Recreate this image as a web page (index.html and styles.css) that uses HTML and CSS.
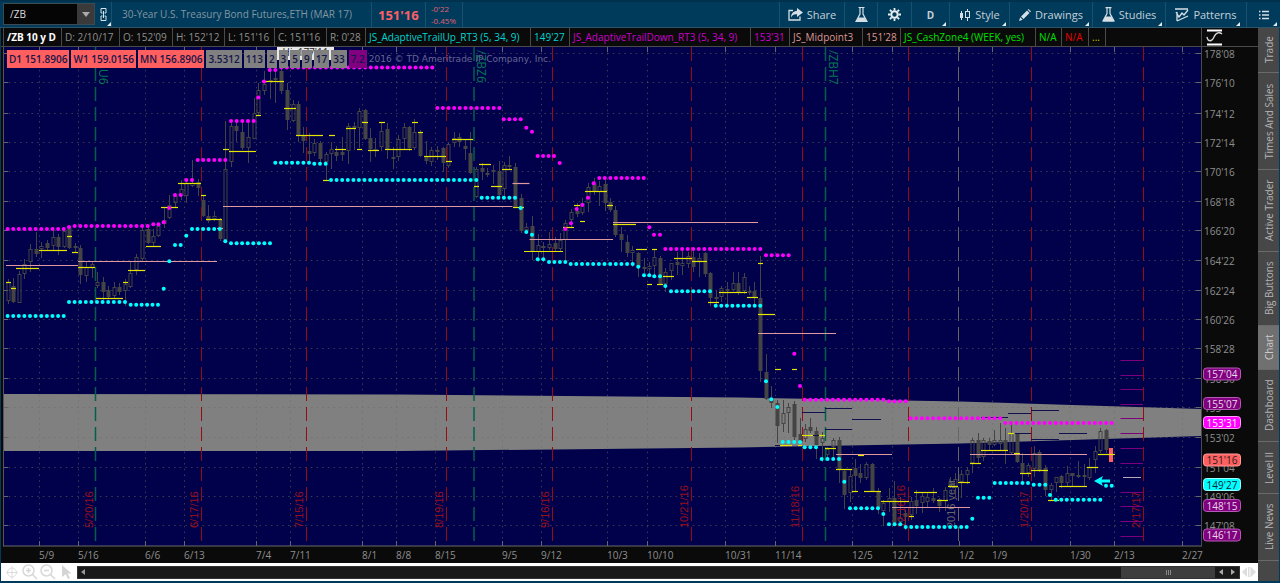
FILE: index.html
```html
<!DOCTYPE html>
<html lang="en">
<head>
<meta charset="utf-8">
<title>/ZB Chart</title>
<link rel="stylesheet" href="styles.css">
</head>
<body>
<header class="toolbar">
  <div class="symbol-box">
    <input class="symbol-input" type="text" value="/ZB" aria-label="Symbol">
    <button class="symbol-drop" aria-label="Recent symbols"><svg width="8" height="5" viewBox="0 0 8 5"><path d="M0 0h8L4 5z" fill="#aaa"/></svg></button>
  </div>
  <button class="tool link-tool corner" aria-label="Link">
    <svg width="7" height="13" viewBox="0 0 7 13" fill="none" stroke="#d8e2e8"><path d="M1 5V.500h5V5H4.500M1 5h1.500M1 8v4.500h5V8H4.500M1 8h1.500M3.500 3v7"/></svg>
  </button>
  <div class="instrument">30-Year U.S. Treasury Bond Futures,ETH (MAR 17)</div>
  <div class="last">151'16</div>
  <div class="change"><span>-0'22</span><span>-0.45%</span></div>
  <div class="spacer"></div>
  <button class="tool w-share"><svg width="15" height="13" viewBox="0 0 15 13"><path d="M5 2.500H1v9.500h11V8.500" fill="none" stroke="#d5dfe5" stroke-width="1.300"/><path d="M9 0l6 4.500L9 9V6.300C6 6 4.500 7 3 9.500 3 5.500 5.500 3 9 2.700z" fill="#d5dfe5"/></svg>Share</button>
  <button class="tool w-flask" aria-label="Edit studies"><svg width="13" height="16" viewBox="0 0 13 16"><path d="M3.500.500h6M5 1v6L1 14.500h11L8 7V1" fill="none" stroke="#d5dfe5" stroke-width="1.200"/><path d="M3.500 10.500h6l2.300 4.500H1.200z" fill="#d5dfe5"/></svg></button>
  <button class="tool w-gear" aria-label="Settings"><svg width="13" height="13" viewBox="0 0 13 13" fill="none" stroke="#e8eef2"><circle cx="6.500" cy="6.500" r="3.200" stroke-width="2"/><path d="M6.500 0v2.500M6.500 10.500V13M0 6.500h2.500M10.500 6.500H13M1.900 1.900l1.800 1.800M9.300 9.300l1.800 1.800M11.100 1.900L9.300 3.700M3.700 9.300l-1.800 1.800" stroke-width="1.800"/></svg></button>
  <button class="tool w-agg corner"><b>D</b></button>
  <button class="tool w-style corner"><svg width="12" height="12" viewBox="0 0 12 12"><path d="M2.500 2v9M8.500 0v12" stroke="#d5dfe5"/><rect x="1" y="4" width="3" height="5" fill="#d5dfe5"/><rect x="6.500" y="2.500" width="4" height="6" fill="#003b5c" stroke="#d5dfe5"/></svg>Style</button>
  <button class="tool w-draw corner"><svg width="12" height="12" viewBox="0 0 12 12" fill="#d5dfe5"><path d="M0 12l1.200-3.700 2.500 2.500zM2 7.500L8 1.500l2.500 2.500-6 6zM8.700.800l.8-.8L12 2.500l-.8.800z"/></svg>Drawings</button>
  <button class="tool w-studies corner"><svg width="13" height="15" viewBox="0 0 13 15"><path d="M3.500.600h6M5 1v5.500L1 14h11L8 6.500V1" fill="none" stroke="#d5dfe5" stroke-width="1.200"/><path d="M3.500 9.500h6l2.500 5H1z" fill="#d5dfe5"/></svg>Studies</button>
  <button class="tool w-patterns corner"><svg width="14" height="14" viewBox="0 0 14 14" fill="none" stroke="#d5dfe5"><path d="M0 1h13M1 4l3 5 3-4 2 2 4-5M2 4v9M2 13l11-5" stroke-width="1.300"/></svg>Patterns</button>
  <button class="tool w-list corner" aria-label="Menu"><svg width="10" height="10" viewBox="0 0 10 10" stroke="#d5dfe5"><path d="M0 1.500h1.500M3 1.500h7M0 5h1.500M3 5h7M0 8.500h1.500M3 8.500h7" stroke-width="1.300"/></svg></button>
</header>

<div class="workspace">
  <main class="chart-pane">
    <div class="status-row">
      <span class="title">/ZB 10 y D</span><span>D: 2/10/17</span><span>O: 152'09</span><span>H: 152'12</span><span>L: 151'16</span><span>C: 151'16</span><span>R: 0'28</span><span class="cyan">JS_AdaptiveTrailUp_RT3 (5, 34, 9)</span><span class="cyan">149'27</span><span class="purple">JS_AdaptiveTrailDown_RT3 (5, 34, 9)</span><span class="purple">153'31</span><span class="salmon">JS_Midpoint3</span><span class="salmon">151'28</span><span class="green">JS_CashZone4 (WEEK, yes)</span><span class="green">N/A</span><span class="red">N/A</span><span class="yellow">...</span><span></span>
      <button class="axis-mode" aria-label="Price axis"><svg width="18" height="17" viewBox="0 0 18 17" fill="none" stroke="#d8d8d8"><path d="M1 1.500h15M1 15.500h15" stroke="#fff" stroke-width="2"/><path d="M1 8c1 5 5 5 7 0s6-5 8-3" stroke-width="1.300"/></svg></button>
    </div>
    <div class="chart">
      <svg class="chart-svg" id="chart" role="img" aria-label="Daily price chart"></svg>
      <div class="tags">
        <span class="tag hot">D1 151.8906</span><span class="tag hot">W1 159.0156</span><span class="tag hot">MN 156.8906</span><span class="tag">3.5312</span><span class="tag">113</span><span class="tag">2</span><span class="tag">3</span><span class="tag">5</span><span class="tag">9</span><span class="tag">17</span><span class="tag">33</span><span class="tag violet">7.2</span><span class="watermark">2016 © TD Ameritrade IP Company, Inc.</span>
      </div>
    </div>
    <footer class="bottom-bar">
      <button class="mini" aria-label="Crosshair"><svg width="12" height="13" viewBox="0 0 12 13" fill="none" stroke="#ddd"><circle cx="6" cy="6.500" r="4.500"/><path d="M6 0v13M0 6.500h12"/></svg></button>
      <button class="mini" aria-label="Zoom in"><svg width="16" height="16" viewBox="0 0 16 16" fill="none" stroke="#d8d8d8"><circle cx="6.500" cy="6.500" r="5.500" stroke-width="1.500"/><path d="M4 6.500h5M6.500 4v5M10.500 10.500l4.500 4.500" stroke-width="1.600"/></svg></button>
      <button class="mini" aria-label="Zoom out"><svg width="16" height="16" viewBox="0 0 16 16" fill="none" stroke="#d8d8d8"><circle cx="6.500" cy="6.500" r="5.500" stroke-width="1.500"/><path d="M4 6.500h5M10.500 10.500l4.500 4.500" stroke-width="1.600"/></svg></button>
      <button class="mini" aria-label="Pointer"><svg width="11" height="14" viewBox="0 0 11 14"><path d="M1 0l9.500 8.500H6.500L9 13l-2 1-2.300-4.700L1 12z" fill="#d4d4d4"/></svg></button>
      <div class="scrollbar">
        <button class="arrow first" aria-label="Scroll to start"><svg width="4" height="6" viewBox="0 0 4 6"><path d="M4 0v6L0 3z" fill="#999"/></svg></button>
        <div class="track"></div>
        <div class="thumb"><i></i><i></i><i></i></div>
        <button class="arrow" aria-label="Scroll left"><svg width="4" height="6" viewBox="0 0 4 6"><path d="M4 0v6L0 3z" fill="#aaa"/></svg></button>
        <button class="arrow" aria-label="Scroll right"><svg width="4" height="6" viewBox="0 0 4 6"><path d="M0 0v6l4-3z" fill="#aaa"/></svg></button>
      </div>
      <button class="mini" aria-label="Fit"><svg width="14" height="10" viewBox="0 0 14 10"><path d="M5 0v10L0 5zM9 0v10l5-5z" fill="#ddd"/><path d="M6.500 0v10M8 0v10" stroke="#ddd"/></svg></button>
    </footer>
  </main>
  <nav class="side-tabs">
    <button class="t-trade">Trade</button><button class="t-times">Times And Sales</button><button class="t-active">Active Trader</button><button class="t-big">Big Buttons</button><button class="t-chart selected">Chart</button><button class="t-dash">Dashboard</button><button class="t-level">Level II</button><button class="t-news">Live News</button><div class="rest"></div>
  </nav>
</div>
<script src="chart.js"></script>
</body>
</html>
```
FILE: styles.css
```css
* { box-sizing: border-box; }
body {
  margin: 0;
  height: 100vh;
  display: flex;
  flex-direction: column;
  overflow: hidden;
  background: #003b5c;
  color: #8f8f8f;
  font: 10px/14px "Open Sans", "Noto Sans", sans-serif;
}
button, input { font: inherit; color: inherit; border: 0; margin: 0; padding: 0; background: none; }

.toolbar {
  flex: none;
  height: 28px;
  display: flex;
  background: #003b5c;
  border-top: 2px solid #00314d;
  border-bottom: 1px solid #2e5468;
  color: #c3d0d8;
}
.symbol-box {
  display: flex;
  width: 92px;
  height: 22px;
  margin: 1px 0 0 3px;
  border: 1px solid #3d4a52;
  background: #050505;
}
.symbol-input { flex: 1; min-width: 0; padding-left: 6px; color: #ddd; outline: 0; font-size: 10px; }
.symbol-drop { width: 17px; background: #3a3a3a; display: flex; align-items: center; justify-content: center; }
.tool {
  position: relative;
  display: flex;
  align-items: center;
  justify-content: center;
  gap: 4px;
  border-left: 1px solid #17516f;
  font-size: 11px;
}
.corner::after {
  content: "";
  position: absolute;
  right: 3px;
  bottom: 1px;
  border-style: solid;
  border-width: 0 0 4px 4px;
  border-color: transparent transparent #e4ecf0 transparent;
}
.link-tool { width: 16px; border-left: 0; }
.link-tool::after { right: 0; }
.instrument { border-left: 1px solid #17516f; padding: 5px 10px 0 10px; width: 260px; white-space: nowrap; color: #8496a0; }
.last { border-left: 1px solid #17516f; width: 54px; padding: 6px 0 0 6px; font-size: 13px; font-weight: 700; color: #ff5f66; }
.change {
  display: flex;
  flex-direction: column;
  width: 38px;
  padding: 1px 0 0 5px;
  border-left: 1px solid #17516f;
  border-right: 1px solid #17516f;
  color: #e06070;
  font-size: 8px;
  line-height: 12px;
}
.spacer { flex: 1; }
.w-share { width: 65px; }
.w-flask { width: 33px; }
.w-gear { width: 34px; }
.w-agg { width: 38px; font-size: 10px; }
.w-style { width: 60px; }
.w-draw { width: 83px; }
.w-studies { width: 73px; }
.w-patterns { width: 81px; }
.w-list { width: 34px; }
.w-patterns::after { right: 6px; }

.workspace { flex: 1; min-height: 0; display: flex; padding: 0 1px 2px 1px; }
.chart-pane { flex: 1; min-width: 0; display: flex; flex-direction: column; background: #0a0a0a; }
.status-row {
  flex: none;
  height: 19px;
  display: grid;
  grid-template-columns: 58px 58px 53px 52px 50px 52px 39px 165px 39px 181px 39px 73px 38px 135px 26px 27px 17px 1fr 57px;
  padding-left: 2px;
  border-bottom: 1px solid #4a4a4a;
}
.status-row span { border-left: 1px solid #4a4a4a; padding: 2px 0 0 3px; white-space: nowrap; color: #8f8f8f; background: #0a0a0a; }
.status-row .title { color: #fff; font-weight: 700; }
.status-row .cyan { color: #00d4d4; }
.status-row .purple { color: #cc00cc; }
.status-row .salmon { color: #dd9696; }
.status-row .green { color: #00e000; }
.status-row .red { color: #e80000; }
.status-row .yellow { color: #c8c800; }
.axis-mode { border-left: 1px solid #4a4a4a; background: #0a0a0a; text-align: left; padding: 1px 0 0 4px; line-height: 0; }

.chart { position: relative; flex: 1; min-height: 0; margin-left: 2px; }
.chart-svg { position: absolute; width: 100%; height: 100%; display: block; }
.tags { position: absolute; left: 4px; top: 3px; display: flex; gap: 2px; }
.tag {
  height: 18px;
  padding: 2px 2px 0;
  background: #808080;
  color: #16164a;
  font-weight: 600;
  white-space: nowrap;
}
.tag.hot { background: #ff5f5f; }
.tag.violet { background: #800080; }
.watermark { padding-top: 2px; color: #66668f; font: 9px/14px "DejaVu Sans", sans-serif; white-space: nowrap; }

.axis-text { fill: #8f8f8f; font-size: 10px; }
.contract { fill: #007a50; font-size: 12px; }
.expiry { fill: #96101c; font: 11px "Liberation Sans", sans-serif; }
.year { fill: #666; font: 11px "Liberation Sans", sans-serif; }
.hi-label { fill: #222; font-size: 10px; }

.bottom-bar { flex: none; height: 18px; display: flex; align-items: center; background: #fff; padding-left: 2px; }
.mini { display: flex; align-items: center; justify-content: center; width: 18px; height: 18px; }
.scrollbar { flex: 1; display: flex; height: 13px; margin-left: 2px; background: #191919; border: 1px solid #333; }
.track { flex: 1; }
.thumb { width: 94px; background: #3e3e3e; display: flex; gap: 1px; align-items: center; justify-content: center; }
.thumb i { width: 1px; height: 5px; background: #888; }
.arrow { width: 12px; display: flex; align-items: center; justify-content: center; }
.arrow.first { width: 9px; }

.side-tabs { flex: none; width: 21px; display: flex; flex-direction: column; background: #474747; }
.side-tabs button {
  writing-mode: vertical-rl;
  rotate: 180deg;
  width: 21px;
  border-top: 1px solid #6a6a6a;
  color: #b4b4b4;
  text-align: center;
  line-height: 20px;
  white-space: nowrap;
}
.side-tabs .selected { background: #707070; color: #ccc; }
.side-tabs .rest { flex: 1; }
.t-trade { height: 45px; }
.t-times { height: 97px; }
.t-active { height: 82px; }
.t-big { height: 74px; }
.t-chart { height: 44px; }
.t-dash { height: 72px; }
.t-level { height: 52px; }
.t-news { height: 67px; }
```
FILE: chart.js
```javascript
// Plot coordinates below share one space whose plot area is this box.
const BOX = { x: 3, y: 47, w: 1198, h: 499 };
const AXIS_W = 57, AXIS_H = 17, STEP = 5.63;

// [x, high, bodyTop, bodyBottom, low, filled]
const candles = [
[8,279,282,301,304,0],[13,278,286,302,303,1],[19,271,274,303,303,0],[24,259,264,274,279,0],[30,244,249,262,272,0],[36,232,249,254,257,1],[41,242,246,249,258,0],[47,240,243,248,250,1],[53,227,237,246,250,0],[58,234,237,247,255,1],[64,229,231,247,248,0],[69,227,228,248,249,1],[75,243,246,248,253,1],[80,245,248,275,284,1],[86,262,267,276,282,0],[92,262,264,268,278,0],[97,272,282,286,288,0],[103,277,282,292,300,1],[108,286,290,297,298,1],[114,282,287,296,298,0],[119,283,287,292,295,1],[125,279,284,291,306,0],[130,262,273,287,288,0],[136,254,257,270,275,0],[142,227,230,259,262,0],[148,226,229,243,244,1],[153,229,236,243,247,0],[158,224,226,236,237,0],[164,208,220,224,228,0],[169,195,205,218,219,0],[175,193,196,203,207,0],[181,180,189,196,200,0],[186,182,183,196,203,0],[192,160,183,186,187,0],[198,179,182,188,196,1],[203,195,200,216,217,1],[208,205,216,221,223,1],[214,211,216,219,221,0],[220,218,220,239,241,1],[225,121,169,240,242,0],
[231,123,126,162,167,0],[236,122,126,131,142,1],[242,123,132,148,150,1],[248,121,137,148,163,0],[254,98,113,139,139,0],[258,83,90,113,115,0],[264,71,84,91,95,0],[270,68,80,82,99,0],[275,68,78,80,103,0],[281,68,71,91,94,1],[287,83,90,120,130,1],[293,100,104,121,122,0],[298,101,104,136,142,1],[303,127,136,141,153,1],[309,133,151,154,162,1],[314,139,143,153,156,0],[320,141,143,159,165,1],[326,152,154,162,180,0],[331,142,149,154,169,0],[336,146,152,156,161,1],[342,137,152,155,161,1],[348,123,126,151,164,0],[354,122,126,128,150,1],[359,108,111,128,148,0],[365,109,110,139,140,1],[370,128,138,149,162,1],[375,138,149,151,157,1],[381,122,131,147,151,0],[387,123,129,150,159,1],[393,147,157,159,169,1],[398,135,139,157,161,0],[404,123,127,139,149,0],[409,126,127,148,151,1],[414,119,132,148,150,0],[420,130,133,156,157,1],[426,141,156,161,164,1],[431,147,150,162,166,0],[437,146,150,151,160,0],[443,147,148,163,172,1],[448,142,144,166,168,0],[454,132,138,143,147,0],[459,133,137,142,147,1],[465,140,146,149,160,1],[470,132,153,173,174,1],[476,167,169,197,198,0],[482,163,168,172,180,1],[487,168,173,175,177,0],[493,165,170,172,184,0],[499,161,171,195,197,1],[504,162,165,189,197,0],[509,156,165,167,170,0],[515,163,167,207,208,1],[521,194,198,231,233,1],[526,223,227,230,233,0],[532,216,226,252,260,1],[538,234,245,252,262,0],[543,242,246,248,262,1],[549,232,244,248,250,0],[555,237,243,249,252,1],[560,233,240,249,252,0],[565,220,223,240,260,0],[571,209,212,220,227,0],[577,203,211,214,217,1],[582,198,203,213,215,0],[588,183,187,203,212,0],[594,178,184,192,195,1],[599,181,186,192,206,0],[605,178,184,203,211,1],[610,198,202,210,212,1],
[615,206,210,235,237,1],[621,227,234,240,252,1],[627,235,242,253,257,1],[632,246,250,253,267,0],[638,252,253,267,277,1],[644,258,267,268,273,0],[649,262,266,269,275,0],[654,249,257,266,275,0],[660,256,258,284,285,1],[665,268,272,284,292,0],[671,263,263,271,280,0],[677,252,262,265,275,1],[682,251,263,266,275,0],[688,252,256,264,268,0],[693,251,257,267,272,1],[699,253,258,262,277,0],[705,252,253,274,277,1],[710,272,273,298,306,1],[716,291,297,299,306,1],[721,286,288,297,302,0],[727,282,289,291,306,0],[733,272,283,290,291,0],[738,272,283,293,295,1],[744,273,277,291,294,0],[749,286,291,293,295,1],[754,282,291,298,307,1],[760,256,298,371,382,1],[766,354,372,399,400,1],[771,386,398,403,408,1],[777,400,403,426,443,1],[783,400,413,424,432,0],[788,403,407,413,433,0],[794,401,404,437,442,1],[800,418,434,442,443,1],[805,424,429,439,442,0],[810,418,427,431,433,1],[816,427,431,445,459,1],[822,432,438,443,462,0],[827,447,449,455,458,0],[833,438,440,447,460,0],[839,437,440,469,483,1],[844,470,471,495,509,1],[850,469,476,493,502,0],[855,459,468,476,492,1],[860,464,473,478,483,1],[866,462,464,478,480,0],[872,463,464,491,492,1],[878,488,492,508,514,1],[883,500,503,511,526,0],[889,488,498,502,512,0],[894,481,498,523,524,1],[900,497,518,522,523,0],[905,510,513,517,530,1],[911,497,501,515,520,0],[916,490,500,506,514,1],[922,493,496,503,513,0],[927,492,497,502,508,0],[933,488,498,501,503,1],[939,498,499,506,512,1],[945,487,490,501,511,0],[950,477,482,486,488,0],[955,473,479,488,497,0],[961,470,474,482,498,0],[967,467,470,475,484,0],[972,438,440,463,473,0],[978,433,440,458,463,1],[983,438,440,457,461,0],[989,438,441,445,450,1],[994,430,440,445,446,0],[1000,423,440,444,450,0],[1005,428,440,451,464,1],[1011,422,433,453,454,0],[1017,433,434,462,463,1],[1022,453,463,473,482,1],[1028,463,465,473,477,0],[1034,446,453,469,477,0],[1039,450,452,470,472,1],[1045,465,468,490,496,1],[1051,483,485,490,500,0],[1056,477,477,483,492,0],[1061,475,476,483,488,1],[1067,466,473,483,486,0],[1072,473,473,476,486,1],[1078,461,475,477,478,0],[1084,464,475,477,487,0],[1089,458,467,478,480,0],[1095,446,451,460,473,0],[1100,428,431,451,453,0],[1106,429,430,450,453,1]
];

// Dotted trails: [xFrom, xTo, y]
const trailDown = [[7.6,63.7,229],[69,69,227],[74.7,147.7,226],[153.3,158.5,224.3],[163.7,163.7,222.3],[169.3,169.3,208],[175,180.7,195],[186.3,192,180],[197.7,225.3,160],[231,253.7,121],[258.3,258.3,97.5],[264,264,81.5],[269.7,275.3,70],[281.3,432.3,67.5],[437.3,499.3,108],[503.7,520.7,119.3],[526.3,526.3,127.7],[532,532,131.7],[537.7,554,156],[559.7,559.7,163],[565.3,565.3,229],[571,571,223.3],[576.7,576.7,209],[582.3,582.3,205],[588,588,197.7],[593.7,593.7,183.3],[599.3,643.7,178],[649.3,649.3,227.3],[654,660,234.7],[665.3,760.3,249],[766,788.7,255.3],[794.3,794.3,353.7],[800,800,386],[804.7,883.3,399.7],[889,905.7,401.3],[910.7,1000.3,418.3],[1005.3,1111.7,423]];
const trailUp = [[7.6,63.7,316],[69,125,302],[130.7,158,304.7],[163.7,163.7,288.7],[169.3,169.3,261.3],[175,180.7,245],[186.3,186.3,235.7],[192,219.7,229],[225.3,225.3,241.3],[231,270,243.3],[275.3,309,162.7],[314.3,325.7,163.7],[331,476.3,180],[481.7,515,197.7],[520.7,520.7,208],[526.3,526.3,232],[532,532,234.7],[537.7,543.3,259.3],[549,565.3,262],[570.7,632.7,264],[638.3,638.3,266.7],[644,649.3,275.3],[654.3,660,276.3],[665.3,665.3,286],[671,710,291.3],[715.7,760.3,305.7],[766,766,381.3],[771.3,771.3,399.3],[777.3,777.3,407],[782.7,800,442],[804.7,816,447.3],[821.7,839,459],[844.3,844.3,481.7],[850,878,508.3],[883.3,883.3,514],[889,900.3,524.3],[905.7,966.7,527],[972.3,972.3,518.7],[978,989.3,497.7],[994.7,1028,483],[1033.7,1045.3,484.7],[1050,1050,495],[1055.7,1100.3,499.7],[1106,1111.7,485.7]];

// Level segments: [xFrom, xTo, y]
const midpoint = [[6,78,265.5],[78,217,261.5],[217,223,228.5],[223,512.5,206.5],[512.5,529.5,183.5],[529.5,613,239.5],[613,758,222.5],[758,836,333.5],[836,892,454.5],[892,970,507.5],[970,1087,454.5]];
const weekly = [[6,11,282.5],[11,16,288.5],[16,39,268.5],[39,67,250.5],[67,72,236.5],[72,78,252.5],[78,95,267.5],[96,123,298.5],[123,128,282.5],[128,145,270.5],[146,161,246.5],[161,178,207.5],[178,201,183.5],[201,206,195.5],[206,222,219.5],[223,229,149.5],[229,256,151.5],[256,261,115.5],[262,284,81.5],[284,296,108.5],[296,323,135.5],[329,335,135.5],[323,329,180.5],[335,346,149.5],[346,356,128.5],[357,362,149.5],[362,368,122.5],[368,379,150.5],[379,385,122.5],[385,412,149.5],[412,418,122.5],[418,423,132.5],[424,446,156.5],[446,452,161.5],[452,473,139.5],[474,479,186.5],[479,491,164.5],[491,502,186.5],[502,512,169.5],[513,524,207.5],[524,563,251.5],[563,574,227.5],[574,580,205.5],[580,585,221.5],[585,607,191.5],[607,613,205.5],[613,636,224.5],[636,647,249.5],[647,652,284.5],[652,657,249.5],[657,663,284.5],[663,674,276.5],[674,692,258.5],[692,707,261.5],[708,719,302.5],[719,747,292.5],[747,758,297.5],[758,763,263.5],[758,775,314.5],[775,781,369.5],[792,797,369.5],[780,792,445.5],[798,802,445.5],[802,813,435.5],[819,825,435.5],[825,836,448.5],[836,852,469.5],[852,858,491.5],[858,864,455.5],[864,881,491.5],[881,909,501.5],[909,914,516.5],[914,937,492.5],[937,948,500.5],[948,958,486.5],[958,970,482.5],[970,981,463.5],[981,1008,450.5],[1008,1014,433.5],[1014,1020,453.5],[1020,1031,473.5],[1031,1048,470.5],[1048,1059,500.5],[1059,1087,486.5],[1087,1098,467.5],[1098,1115,454.5]];
const zoneLevels = [[802,825,412.5],[825,852,408.5],[852,881,419.5],[825,852,429.5],[813,819,435.5],[775,780,445.5],[981,1008,417.5],[1008,1031,413.5],[1031,1059,410.5],[1015,1031,433.5],[1031,1059,439.5],[1059,1087,433.5]];
const projected = [360.5,375.5,389.5,404.5,418.5,433.5,448.5,463.5,492.5,506.5,521.5,536.5];

const prices = [["178'08",53.5],["176'10",82.5],["174'12",113.5],["172'14",142.5],["170'16",171.5],["168'18",201.5],["166'20",230.5],["164'22",260.5],["162'24",290.5],["160'26",319.5],["158'28",348.5],["156'30",378.5],["155",407.5],["153'02",437.5],["151'04",467.5],["149'06",496.5],["147'08",525.5]];
const dates = [["5/9",39.5],["5/16",78.5],["6/6",145.5],["6/13",184.5],["7/4",256.5],["7/11",290.5],["8/1",362.5],["8/8",396.5],["8/15",435.5],["9/5",502.5],["9/12",541.5],["10/3",607.5],["10/10",647.5],["10/31",725.5],["11/14",775.5],["12/5",852.5],["12/12",892.5],["1/2",959.5],["1/9",992.5],["1/30",1070.5],["2/13",1114.5],["2/27",1182.5]];
const expiries = [["5/20/16",96.5],["6/17/16",201.5],["7/15/16",306.5],["8/19/16",446.5],["9/16/16",552.5],["10/21/16",691.5],["11/18/16",802.5],["12/16/16",908.5],["1/20/17",1031.5],["2/17/17",1143.5]];
const contracts = [["/ZBU6",95.5],["/ZBZ6",474],["/ZBH7",825.5]];
const bubbles = [["157'04",374,"#800080","#b45ab4","#e8d8e8"],["155'07",403.5,"#800080","#b45ab4","#e8d8e8"],["153'31",422.5,"#ff00ff","#ff9cff","#fff"],["151'16",460,"#ff5f5f","#ff9a9a","#222"],["149'27",484.5,"#00ffff","#a0ffff","#123"],["148'15",505.5,"#800080","#b45ab4","#e8d8e8"],["146'17",535,"#800080","#b45ab4","#e8d8e8"]];

const svg = document.getElementById("chart");

function draw() {
  const W = svg.clientWidth, H = svg.clientHeight;
  const pw = W - AXIS_W, ph = H - AXIS_H;
  const X = v => +((v - BOX.x) * pw / BOX.w).toFixed(1);
  const Y = v => +((v - BOX.y) * ph / BOX.h).toFixed(1);
  const out = [];
  const line = (x1, y1, x2, y2, c, extra = "") => out.push(`<path d="M${x1} ${y1}L${x2} ${y2}" stroke="${c}" ${extra}/>`);
  const text = (x, y, s, cls, extra = "") => out.push(`<text x="${x}" y="${y}" class="${cls}" ${extra}>${s}</text>`);

  out.push(`<rect width="${pw}" height="${ph}" fill="#00004b"/>`);
  const zone = [[3,394],[400,394.5],[740,397.5],[960,401.5],[1201,409],[1201,436],[960,443.5],[740,447.5],[400,451],[3,451]];
  out.push(`<polygon points="${zone.map(p => X(p[0]) + "," + Y(p[1])).join(" ")}" fill="#808080"/>`);

  const dotted = 'stroke-dasharray="1.5 4.2" opacity=".55"';
  for (const [, y] of prices) {
    line(0, Y(y), pw, Y(y), "#6c6c60", dotted);
    line(0, Y(y), 5, Y(y), "#66666a");
    line(pw - 5, Y(y), pw, Y(y), "#66666a");
  }
  for (const [t, x] of dates) {
    if (t !== "1/2") line(X(x), 0, X(x), ph, "#6c6c60", dotted);
    line(X(x), 0, X(x), 5, "#66666a");
    line(X(x), ph - 5, X(x), ph, "#66666a");
  }
  line(X(958.5), 0, X(958.5), ph - 4, "#666660", 'stroke-dasharray="14 6"');

  for (const [x, hi, top, bot, lo, filled] of candles) {
    const cx = X(x + .5), h = Math.max(1, Y(bot) - Y(top));
    line(cx, Y(hi), cx, Y(top), "#444444");
    line(cx, Y(bot), cx, Y(lo), "#444444");
    out.push(filled
      ? `<rect x="${cx - 2}" y="${Y(top)}" width="4" height="${h}" fill="#444444"/>`
      : `<rect x="${cx - 1.5}" y="${Y(top) + .5}" width="3" height="${Math.max(1, h - 1)}" fill="none" stroke="#444444"/>`);
  }
  out.push(`<rect x="${X(1109)}" y="${Y(448)}" width="4" height="${Y(462) - Y(448)}" fill="#ff5f5f"/>`);

  for (const [t, x] of expiries) {
    if (t !== "5/20/16") line(X(x), 0, X(x), ph - 4, "#960c10", 'stroke-dasharray="14 6"');
    text(0, 0, t, "expiry", `transform="translate(${X(x - 3.5)} ${Y(528)}) rotate(-90)"`);
  }
  text(0, 0, "2016 year", "year", `transform="translate(${X(955)} ${Y(528)}) rotate(-90)"`);
  for (const [t, x] of contracts) {
    line(X(x), 0, X(x), ph - 4, "#00604a", 'stroke-width="1.5" stroke-dasharray="14 6"');
    text(0, 0, t, "contract", `transform="translate(${X(x + 3)} ${Y(50)}) rotate(90)"`);
  }

  const segs = (list, c, w = 1) => list.forEach(([a, b, y]) => line(X(a), Y(y), X(b), Y(y), c, `stroke-width="${w}"`));
  segs(zoneLevels, "#10104e");
  segs(projected.map(y => [1120.5, 1143, y]), "#7c007c");
  segs([[1123, 1141, 477.5]], "#b8a8b8");
  segs(midpoint, "#e09a9f", 1.2);
  segs(weekly, "#e6e600", 1.2);

  const dots = (list, c) => list.forEach(([a, b, y]) => {
    const n = Math.round((b - a) / STEP);
    for (let i = 0; i <= n; i++) out.push(`<circle cx="${X(n ? a + (b - a) * i / n : a)}" cy="${Y(y)}" r="2" fill="${c}"/>`);
  });
  dots(trailDown, "#ff00ff");
  dots(trailUp, "#00ffff");
  out.push(`<path transform="translate(${X(1094)} ${Y(481)})" d="M0 0L9-5L7.500-1.500H16V1.500H7.500L9 5Z" fill="#00ffff"/>`);

  out.push(`<rect x="${X(277)}" y="0" width="57" height="13" fill="#e8e8e8"/>`);
  text(X(305.5), 9, "Hi: 177'11", "hi-label", 'text-anchor="middle"');

  line(.5, 0, .5, ph, "#55555a");
  line(0, ph, pw + 1, ph, "#6a6a6a");
  line(pw + .5, 0, pw + .5, ph, "#4a4a4a");
  for (const [t, y] of prices) text(pw + 3, Y(y) + 4, t, "axis-text");
  for (const [t, x] of dates) text(X(x) - 0.5, ph + 13, t, "axis-text");
  for (const [t, y, fill, edge, ink] of bubbles) {
    out.push(`<rect x="${pw + 2.5}" y="${Y(y) - 6}" width="37" height="12" rx="3" fill="${fill}" stroke="${edge}"/>`);
    out.push(`<text x="${pw + 21}" y="${Y(y) + 4}" font-size="10" text-anchor="middle" fill="${ink}">${t}</text>`);
  }
  svg.innerHTML = out.join("");
}
draw();
addEventListener("resize", draw);
```
